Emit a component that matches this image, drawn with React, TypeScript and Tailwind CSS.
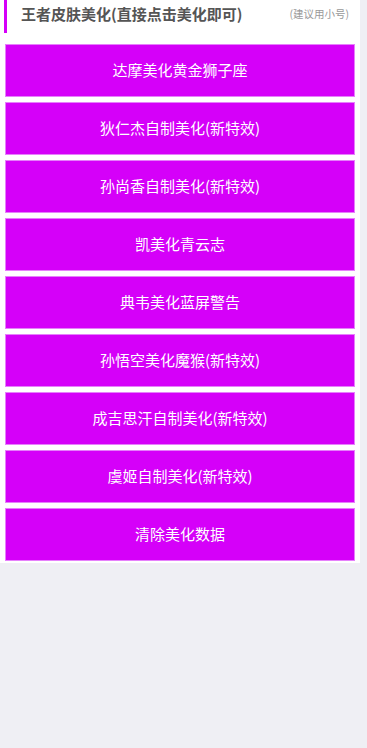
const items = [
  '达摩美化黄金狮子座',
  '狄仁杰自制美化(新特效)',
  '孙尚香自制美化(新特效)',
  '凯美化青云志',
  '典韦美化蓝屏警告',
  '孙悟空美化魔猴(新特效)',
  '成吉思汗自制美化(新特效)',
  '虞姬自制美化(新特效)',
  '清除美化数据',
]

export default function App() {
  return (
    <div
      className="h-[748px] w-[367px] bg-[#efeff4]"
      style={{ fontFamily: '"Noto Sans CJK SC", "Liberation Sans", sans-serif' }}
    >
      <div className="w-[360px] bg-white pb-[2px]">
        <div className="flex h-[33px] items-start">
          <div className="ml-[4px] h-[33px] w-[3px] bg-[#d500f9]" />
          <div className="ml-[14px] mt-[3px] text-[15px] font-bold leading-[22px] text-[#555]">
            王者皮肤美化(直接点击美化即可)
          </div>
          <div className="ml-auto mr-[11px] mt-[6px] text-[10.5px] leading-[16px] text-[#999]">
            (建议用小号)
          </div>
        </div>
        <div className="mt-[11px] flex flex-col gap-[5px] pl-[5px] pr-[5px]">
          {items.map((t) => (
            <button
              key={t}
              className="flex h-[53px] w-[350px] items-center justify-center border border-[#e680fb] bg-[#d500f9] text-[15px] text-white"
            >
              {t}
            </button>
          ))}
        </div>
      </div>
    </div>
  )
}
